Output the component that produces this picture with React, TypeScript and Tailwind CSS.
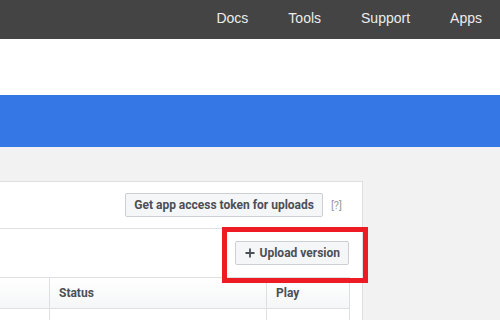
import React from "react";

const navItems = ["Docs", "Tools", "Support", "Apps"];

export default function App() {
  return (
    <div className="w-[500px] h-[320px] overflow-hidden bg-[#f2f2f2]">
      <div className="h-[39px] bg-[#444444] flex items-center justify-end gap-[40px] pr-[18px] pb-[3px] font-['Liberation_Sans',Arial,sans-serif] text-[14px] text-[#ececec]">
        {navItems.map((item) => (
          <span key={item} className="leading-none">
            {item}
          </span>
        ))}
      </div>
      <div className="h-[56px] bg-white" />
      <div className="h-[52px] bg-[#3578e5]" />

      <div className="pt-[34px] font-['Roboto',Arial,sans-serif]">
        <div className="relative w-[363px] bg-white border-t border-r border-[#dddfe2]">
          <div className="h-[47px] flex items-center justify-end pr-[20px] border-b border-[#dddfe2]">
            <button className="h-[24px] px-[8px] border border-[#ccd0d5] rounded-[2px] bg-[#f5f6f7] text-[12px] font-bold text-[#4b4f56] leading-none">
              Get app access token for uploads
            </button>
            <span className="ml-[8px] text-[11px] text-[#999999] leading-none">[?]</span>
          </div>

          <div className="pt-[12px] pr-[13px]">
            <div className="flex justify-end">
              <button className="h-[24px] pl-[9px] pr-[8px] flex items-center gap-[5px] border border-[#ccd0d5] rounded-[2px] bg-[#f5f6f7] text-[12px] font-bold text-[#4b4f56] leading-none">
                <svg width="10" height="10" viewBox="0 0 10 10" className="shrink-0">
                  <path d="M5 0.5v9M0.5 5h9" stroke="#4b4f56" strokeWidth="1.8" />
                </svg>
                Upload version
              </button>
            </div>

            <div className="mt-[12px] w-[350px]">
              <div className="grid grid-cols-[49px_217px_84px] h-[32px] border-t border-b border-[#dddfe2] bg-gradient-to-b from-white to-[#f5f6f7] text-[12px] font-bold text-[#4b4f56]">
                <div />
                <div className="border-l border-[#dddfe2] flex items-center pl-[9px]">Status</div>
                <div className="border-l border-r border-[#dddfe2] flex items-center pl-[9px]">Play</div>
              </div>
              <div className="grid grid-cols-[49px_217px_84px] h-[40px]">
                <div />
                <div className="border-l border-[#dddfe2]" />
                <div className="border-l border-r border-[#dddfe2]" />
              </div>
            </div>
          </div>

          <div className="absolute top-[45px] left-[222px] w-[146px] h-[56px] border-[5px] border-[#ed1c24]" />
        </div>
      </div>
    </div>
  );
}
